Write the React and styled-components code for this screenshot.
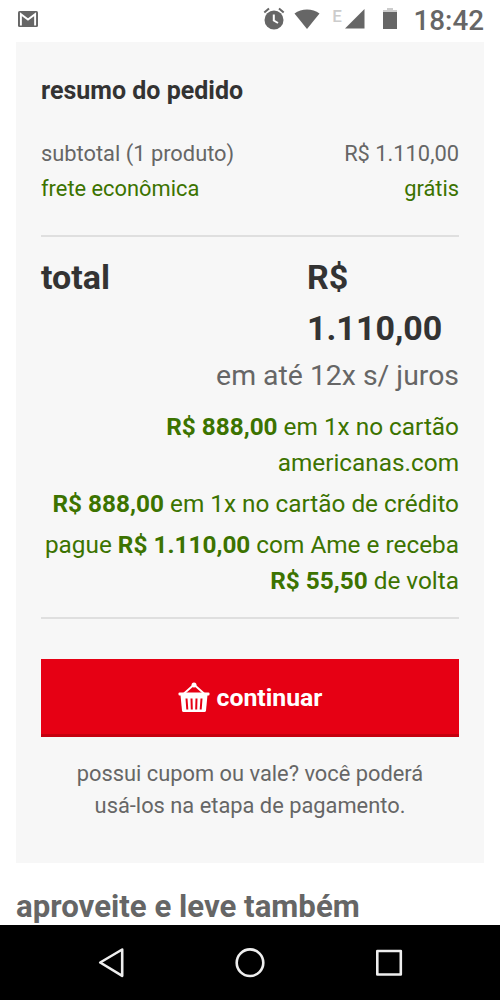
import React from 'react'
import styled, { createGlobalStyle } from 'styled-components';

const GlobalStyle = createGlobalStyle`
  * {
    box-sizing: border-box;
  }
  body {
    margin: 0;
    background: #fff;
    font-family: Roboto, "Liberation Sans", sans-serif;
    color: #666;
  }
`;

const Screen = styled.div`
  display: flex;
  flex-direction: column;
  width: 500px;
  height: 1000px;
  overflow: hidden;
`;

const StatusBar = styled.header`
  flex: none;
  display: flex;
  align-items: center;
  height: 42px;
  padding: 0 16px 4px 17px;
  color: #666;
  svg {
    display: block;
    flex: none;
  }
`;

const StatusIcons = styled.div`
  display: flex;
  align-items: center;
  margin-left: auto;
`;

const Network = styled.span`
  margin: 0 3px 6px 12px;
  font-size: 17px;
  line-height: 20px;
  font-weight: 500;
  color: #ccc;
`;

const Clock = styled.time`
  margin-left: 16px;
  padding-top: 3px;
  font-size: 27.8px;
  line-height: 34px;
  font-weight: 500;
`;

const Content = styled.main`
  flex: 1;
  min-height: 0;
  padding: 0 16px;
  overflow: hidden;
`;

const Summary = styled.section`
  height: 821px;
  padding: 31px 25px 0;
  background: #f7f7f7;
`;

const Title = styled.h2`
  margin: 0 0 27px;
  font-size: 25px;
  line-height: 36px;
  font-weight: 700;
  color: #333;
`;

const Row = styled.div`
  display: flex;
  justify-content: space-between;
  font-size: 21.85px;
  line-height: 35px;
  color: ${({ $free }) => ($free ? '#3c7300' : '#666')};
`;

const Divider = styled.hr`
  height: 2px;
  margin: ${({ $space }) => $space};
  border: 0;
  background: #dfdfdf;
`;

const Total = styled.div`
  display: flex;
  justify-content: space-between;
  font-size: 34px;
  line-height: 51px;
  font-weight: 700;
  color: #333;
`;

const TotalValue = styled.span`
  width: 152px;
`;

const Installments = styled.p`
  margin: 0 0 11px;
  font-size: 28.4px;
  line-height: 44px;
  text-align: right;
`;

const Offer = styled.p`
  margin: 0 0 5px;
  font-size: 24.35px;
  line-height: 36px;
  text-align: right;
  white-space: nowrap;
  color: #3c7300;
`;

const BuyButton = styled.button`
  display: flex;
  align-items: center;
  justify-content: center;
  gap: 7px;
  width: 100%;
  height: 78px;
  padding: 2px 0 0;
  border: 0;
  border-bottom: 3px solid #c5000f;
  background: #e60014;
  color: #fff;
  font-family: inherit;
  font-size: 24.8px;
  font-weight: 700;
`;

const Coupon = styled.p`
  margin: 21px 0 0;
  font-size: 21.85px;
  line-height: 32px;
  text-align: center;
`;

const NextTitle = styled.h2`
  margin: 24px 0 0;
  font-size: 31.2px;
  line-height: 40px;
  font-weight: 700;
`;

const NavBar = styled.nav`
  flex: none;
  display: flex;
  align-items: center;
  justify-content: space-between;
  height: 75px;
  padding: 0 95px;
  background: #000;
`;

const offers = [
  <><b>R$ 888,00</b> em 1x no cartão<br />americanas.com</>,
  <><b>R$ 888,00</b> em 1x no cartão de crédito</>,
  <>pague <b>R$ 1.110,00</b> com Ame e receba<br /><b>R$ 55,50</b> de volta</>,
];

const MailIcon = () => (
  <svg width="22" height="18" viewBox="0 0 22 18">
    <rect x="1" y="1" width="20" height="16" rx="1.5" fill="currentColor" />
    <path d="M3.9 15.5V4.2L11 9.5L18.1 4.2V15.5" fill="none" stroke="#fff" strokeWidth="1.9" />
  </svg>
);

const AlarmIcon = () => (
  <svg width="22" height="24" viewBox="0 0 22 24">
    <circle cx="11" cy="13" r="9.5" fill="currentColor" />
    <path d="M1.3 5.6L6 1.5M20.7 5.6L16 1.5" stroke="currentColor" strokeWidth="2" />
    <path d="M10.8 7.5V13.5L15 16" fill="none" stroke="#fff" strokeWidth="2" />
  </svg>
);

const WifiSvg = styled.svg`
  margin-left: 9px;
`;

const WifiIcon = () => (
  <WifiSvg width="26" height="20" viewBox="0 0 26 20">
    <path d="M0.5 4.5C7.5-1 18.5-1 25.5 4.5L13 20Z" fill="currentColor" />
  </WifiSvg>
);

const SignalIcon = () => (
  <svg width="20" height="20" viewBox="0 0 20 20">
    <path d="M19.5 0V19.5H0Z" fill="currentColor" />
  </svg>
);

const BatterySvg = styled.svg`
  margin-left: 18.5px;
`;

const BatteryIcon = () => (
  <BatterySvg width="14" height="22" viewBox="0 0 14 22">
    <path d="M4 0H10V2H14V5H0V2H4Z" fill="#ccc" />
    <path d="M0 4H14V21H0Z" fill="currentColor" />
  </BatterySvg>
);

// solid basket, the slots are cut out in the button colour
const BasketIcon = () => (
  <svg width="32" height="31" viewBox="0 0 32 31">
    <path d="M6 11.5L15 3.5H17L26 11.5" fill="none" stroke="#fff" strokeWidth="1.8" />
    <circle cx="16" cy="3" r="2.5" fill="#fff" />
    <rect x="0.5" y="10.5" width="31" height="3" rx="1" fill="#fff" />
    <path d="M2.5 13H29.5L28 28.5Q27.800 30 26.5 30H5.500Q4.200 30 4 28.5Z" fill="#fff" />
    <path d="M8.5 16.500L9.300 27.500M13.500 16.500L13.800 27.500M18.500 16.500L18.200 27.500M23.500 16.500L22.700 27.500" stroke="#e60014" strokeWidth="2" />
  </svg>
);

const App = () => {
  return (
    <Screen>
      <GlobalStyle />
      <StatusBar>
        <MailIcon />
        <StatusIcons>
          <AlarmIcon />
          <WifiIcon />
          <Network>E</Network>
          <SignalIcon />
          <BatteryIcon />
          <Clock>18:42</Clock>
        </StatusIcons>
      </StatusBar>

      <Content>
        <Summary>
          <Title>resumo do pedido</Title>
          <Row>
            <span>subtotal (1 produto)</span>
            <span>R$ 1.110,00</span>
          </Row>
          <Row $free>
            <span>frete econômica</span>
            <span>grátis</span>
          </Row>
          <Divider $space="29px 0 15px" />
          <Total>
            <span>total</span>
            <TotalValue>R$<br />1.110,00</TotalValue>
          </Total>
          <Installments>em até 12x s/ juros</Installments>
          {offers.map((offer, i) => (
            <Offer key={i}>{offer}</Offer>
          ))}
          <Divider $space="18px 0 40px" />
          <BuyButton>
            <BasketIcon />
            continuar
          </BuyButton>
          <Coupon>
            possui cupom ou vale? você poderá<br />
            usá-los na etapa de pagamento.
          </Coupon>
        </Summary>
        <NextTitle>aproveite e leve também</NextTitle>
      </Content>

      <NavBar>
        <svg width="32" height="32" viewBox="0 0 32 32" fill="none" stroke="#eee" strokeWidth="2.6" strokeLinejoin="round">
          <path d="M27.2 2.5L5.2 15.5L27.2 28.8Z" />
        </svg>
        <svg width="32" height="32" viewBox="0 0 32 32" fill="none" stroke="#eee" strokeWidth="2.6">
          <circle cx="16" cy="15.7" r="13.3" />
        </svg>
        <svg width="32" height="32" viewBox="0 0 32 32" fill="none" stroke="#eee" strokeWidth="2.6" strokeLinejoin="round">
          <rect x="4.3" y="4" width="23.5" height="23.5" />
        </svg>
      </NavBar>
    </Screen>
  );
};

export default App;
